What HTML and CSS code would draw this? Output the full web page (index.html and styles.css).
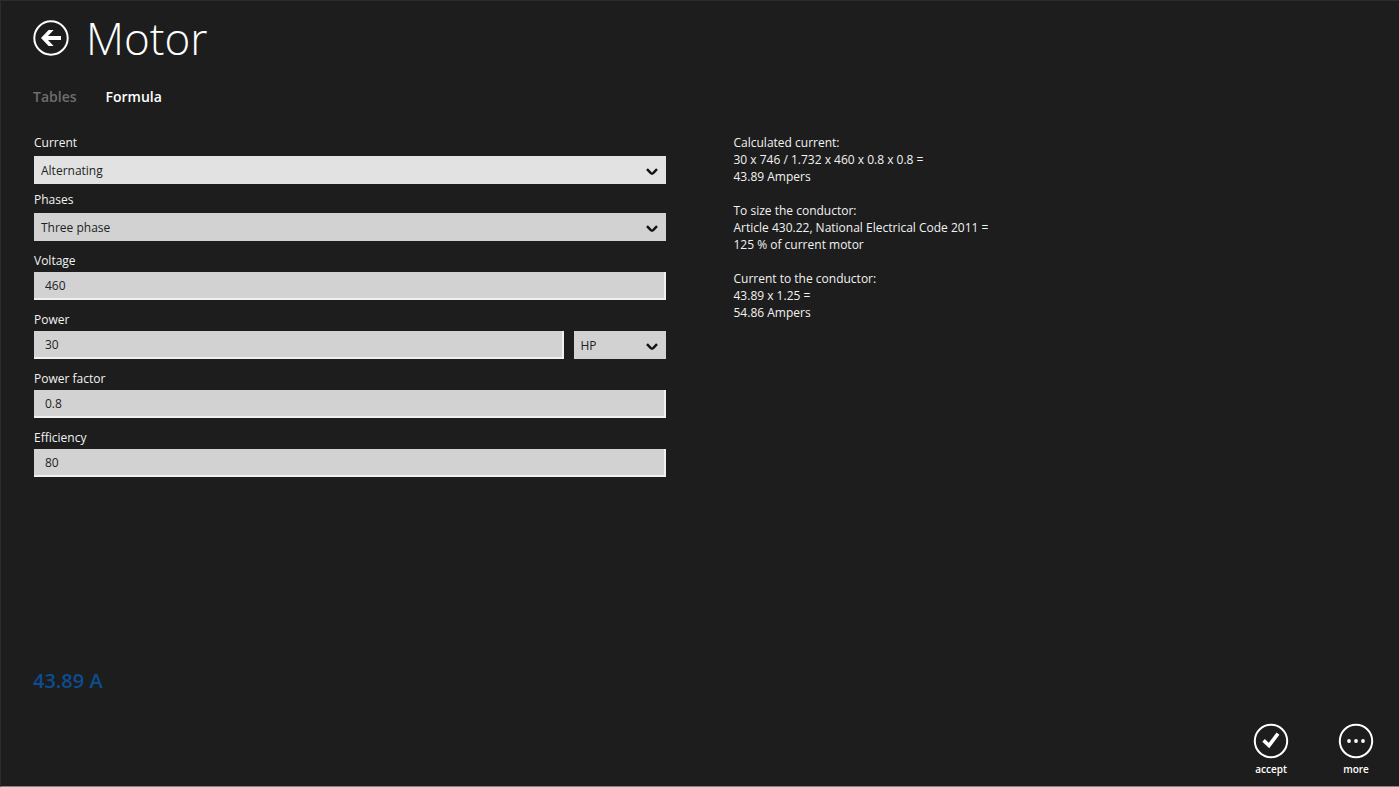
FILE: index.html
```html
<!DOCTYPE html>
<html lang="en">

<head>
  <meta charset="UTF-8">
  <meta name="viewport" content="width=device-width, initial-scale=1.0">
  <title>Motor</title>
  <link rel="stylesheet" href="styles.css">
</head>

<body>
  <div class="page">
    <header class="header">
      <button class="round-btn" type="button" aria-label="Back">
        <svg class="ring" viewBox="0 0 36 36">
          <circle cx="18" cy="18" r="16.7" />
          <path class="solid" d="M8 18 15.6 10H20.6L15 16H28V20H15L20.6 26H15.6Z" />
        </svg>
      </button>
      <h1>Motor</h1>
    </header>

    <nav class="tabs">
      <a href="#tables">Tables</a>
      <a href="#formula" class="active">Formula</a>
    </nav>

    <main class="content">
      <form class="form">
        <div class="field">
          <label for="current">Current</label>
          <div class="select light">
            <select id="current">
              <option>Alternating</option>
              <option>Direct</option>
            </select>
            <svg viewBox="0 0 12 8"><path d="M1 1.2 4.8 5.2Q6 6.2 7.2 5.2L11 1.2" /></svg>
          </div>
        </div>
        <div class="field">
          <label for="phases">Phases</label>
          <div class="select">
            <select id="phases">
              <option>Three phase</option>
              <option>Single phase</option>
            </select>
            <svg viewBox="0 0 12 8"><path d="M1 1.2 4.8 5.2Q6 6.2 7.2 5.2L11 1.2" /></svg>
          </div>
        </div>
        <div class="field text">
          <label for="voltage">Voltage</label>
          <input id="voltage" type="text" value="460">
        </div>
        <div class="field text">
          <label for="power">Power</label>
          <div class="row">
            <input id="power" type="text" value="30">
            <div class="select unit">
              <select aria-label="Power unit">
                <option>HP</option>
                <option>kW</option>
              </select>
              <svg viewBox="0 0 12 8"><path d="M1 1.2 4.8 5.2Q6 6.2 7.2 5.2L11 1.2" /></svg>
            </div>
          </div>
        </div>
        <div class="field text">
          <label for="factor">Power factor</label>
          <input id="factor" type="text" value="0.8">
        </div>
        <div class="field text">
          <label for="efficiency">Efficiency</label>
          <input id="efficiency" type="text" value="80">
        </div>
      </form>

      <section class="steps">
        <p>Calculated current:<br>30 x 746 / 1.732 x 460 x 0.8 x 0.8 =<br>43.89 Ampers</p>
        <p>To size the conductor:<br>Article 430.22, National Electrical Code 2011 =<br>125 % of current motor</p>
        <p>Current to the conductor:<br>43.89 x 1.25 =<br>54.86 Ampers</p>
      </section>
    </main>

    <output class="result" for="voltage power factor efficiency">43.89 A</output>

    <footer class="appbar">
      <button class="round-btn" type="button">
        <svg class="ring" viewBox="0 0 36 36">
          <circle cx="18" cy="18" r="16.2" />
          <path class="check" d="M10.6 17.4 16 22.6 25 10.6" />
        </svg>
        <span>accept</span>
      </button>
      <button class="round-btn" type="button">
        <svg class="ring" viewBox="0 0 36 36">
          <circle cx="18" cy="18" r="16.2" />
          <circle class="solid" cx="11" cy="18" r="1.9" />
          <circle class="solid" cx="18" cy="18" r="1.9" />
          <circle class="solid" cx="25" cy="18" r="1.9" />
        </svg>
        <span>more</span>
      </button>
    </footer>
  </div>
</body>

</html>
```
FILE: styles.css
```css
* {
  box-sizing: border-box;
}
body {
  margin: 0;
  background: #1d1d1d;
  color: #f2f2f2;
  font-family: "Open Sans", "Noto Sans", sans-serif;
  font-size: 12px;
  line-height: 17px;
}
.page {
  display: flex;
  flex-direction: column;
  min-height: 100vh;
  padding: 12px 33px 10px 32px;
  border: 1px solid #2c2c2c;
  border-right: 0;
  border-bottom-color: #858585;
}
.header {
  display: flex;
  align-items: center;
  gap: 17px;
  height: 50px;
}
h1 {
  margin: 0;
  font-size: 44px;
  font-weight: 300;
  line-height: 50px;
  color: #fff;
}

/* round buttons */
.round-btn {
  display: flex;
  flex-direction: column;
  align-items: center;
  gap: 3px;
  padding: 0;
  border: 0;
  background: none;
  color: #fff;
  font: inherit;
  font-size: 10px;
  line-height: 14px;
  cursor: pointer;
}
.round-btn span {
  font-weight: 600;
}
.ring {
  display: block;
  width: 36px;
  height: 36px;
  fill: none;
  stroke: #fff;
  stroke-width: 2;
}
.ring .solid {
  fill: #fff;
  stroke: none;
}
.ring .check {
  stroke-width: 3.6;
}

/* tabs */
.tabs {
  display: flex;
  gap: 29px;
  margin-top: 24px;
  font-size: 14px;
  font-weight: 600;
  line-height: 20px;
}
.tabs a {
  color: #6e6e6e;
  text-decoration: none;
}
.tabs a.active {
  color: #fff;
}

.content {
  display: grid;
  grid-template-columns: 1fr 1fr;
  gap: 68px;
  margin-top: 27px;
}

/* form */
.form {
  padding-left: 1px;
}
.field {
  margin-bottom: 7px;
}
.field.text {
  margin: 11px 0;
}
.field label {
  display: block;
  margin-bottom: 5px;
  line-height: 17px;
}
.field.text label {
  margin-bottom: 3px;
}
.row {
  display: flex;
  gap: 10px;
}
.select {
  position: relative;
}
.select.unit {
  flex: none;
  width: 92px;
}
input,
select {
  display: block;
  width: 100%;
  height: 28px;
  margin: 0;
  border: 0;
  border-radius: 0;
  background: #d2d2d2;
  color: #222;
  font: inherit;
}
input {
  padding: 0 9px 0 11px;
  border: solid #f0f0f0;
  border-width: 0 2px 2px 0;
}
select {
  padding: 0 30px 0 7px;
  appearance: none;
}
.select.light select {
  background: #e2e2e2;
}
.select svg {
  position: absolute;
  top: 12px;
  right: 8px;
  width: 12px;
  height: 8px;
  fill: none;
  stroke: #111;
  stroke-width: 2.4;
  pointer-events: none;
}

.steps p {
  margin: 0 0 17px;
}

.result {
  margin-top: auto;
  color: #0c4d8f;
  font-size: 20px;
  font-weight: 600;
  line-height: 24px;
}
.appbar {
  display: flex;
  justify-content: flex-end;
  gap: 49px;
  margin: 30px -8px 0 0;
}
```
